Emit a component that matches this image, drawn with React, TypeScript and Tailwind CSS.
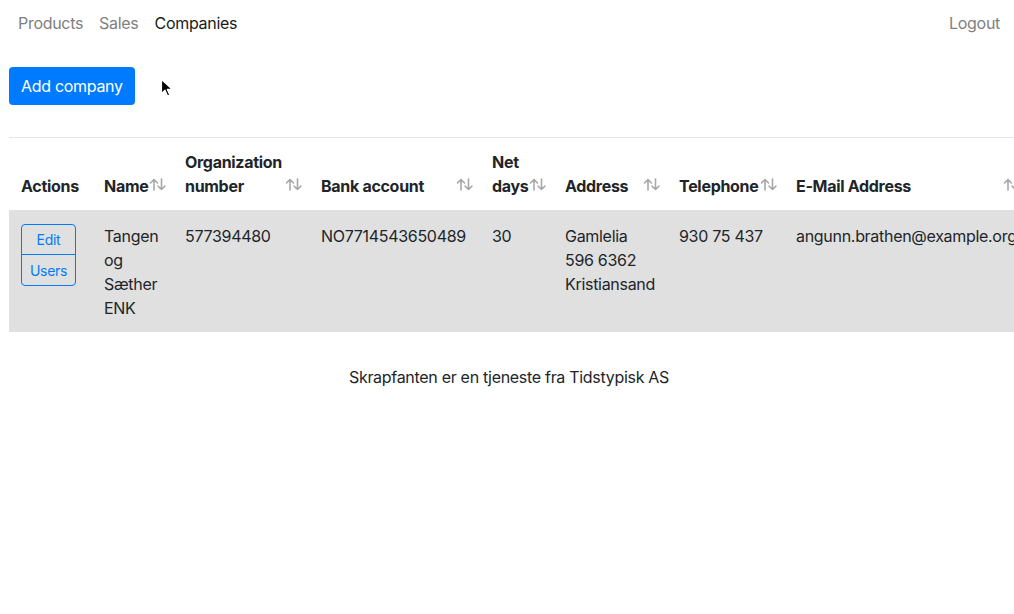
import React from 'react';

type Company = {
  name: string;
  orgNumber: string;
  bankAccount: string;
  netDays: number;
  address: string;
  telephone: string;
  email: string;
};

const companies: Company[] = [
  {
    name: 'Tangen og Sæther ENK',
    orgNumber: '577394480',
    bankAccount: 'NO7714543650489',
    netDays: 30,
    address: 'Gamlelia\n596 6362\nKristiansand',
    telephone: '930 75 437',
    email: 'angunn.brathen@example.org',
  },
];

const columns = [
  { label: 'Name', width: 'w-[81px]' },
  { label: 'Organization number', width: 'w-[136px]' },
  { label: 'Bank account', width: 'w-[171px]' },
  { label: 'Net days', width: 'w-[73px]' },
  { label: 'Address', width: 'w-[114px]' },
  { label: 'Telephone', width: 'w-[117px]' },
  { label: 'E-Mail Address', width: 'w-[243px]' },
];

function SortIcon() {
  return (
    <svg className="absolute right-[6px] bottom-[19px]" width="18" height="13" viewBox="0 0 18 13" fill="none" stroke="#a8a8a8" strokeWidth="1.6" strokeLinecap="round" strokeLinejoin="round">
      <path d="M5 12V1.5M1.5 5L5 1.5L8.5 5" />
      <path d="M12.5 1V11.5M9 8L12.5 11.5L16 8" />
    </svg>
  );
}

function Cursor() {
  return (
    <svg className="absolute left-[160px] top-[78px]" width="14" height="20" viewBox="0 0 14 20">
      <path d="M1.5 1.5V15.5L5 12.2L7.6 18L9.8 17L7.3 11.4H12.2Z" fill="#000" stroke="#fff" strokeWidth="1.2" strokeLinejoin="round" />
    </svg>
  );
}

export default function App() {
  return (
    <div className="relative min-h-screen w-full overflow-hidden bg-white text-[16px] leading-6 tracking-[-0.3px] text-[#212529] font-['Inter','Liberation_Sans',sans-serif]">
      <nav className="flex h-[46px] items-center justify-between pl-[10px] pr-[6px]">
        <div className="flex">
          <a className="px-2 text-[#808080]">Products</a>
          <a className="px-2 text-[#808080]">Sales</a>
          <a className="px-2 text-[#1a1a1a]">Companies</a>
        </div>
        <a className="px-2 text-[#808080]">Logout</a>
      </nav>

      <div className="pl-[9px]">
        <button className="mt-[21px] h-[38px] rounded-[4px] bg-[#007bff] px-3 text-white">Add company</button>
        <div className="mt-[32px] h-px w-[1005px] bg-[#e5e5e5]" />

        <table className="w-[1018px] table-fixed border-collapse text-left">
          <thead>
            <tr>
              <th className="w-[83px] px-3 py-3 align-bottom font-bold">Actions</th>
              {columns.map((col) => (
                <th key={col.label} className={`${col.width} relative py-3 pl-3 pr-[30px] align-bottom font-bold`}>
                  {col.label}
                  <SortIcon />
                </th>
              ))}
            </tr>
          </thead>
          <tbody>
            {companies.map((company) => (
              <tr key={company.orgNumber} className="bg-[#e0e0e0]">
                <td className="px-3 pt-[14px] pb-3 align-top">
                  <div className="flex w-[55px] flex-col text-[14px] leading-[21px] text-[#007bff]">
                    <button className="h-[31px] rounded-t-[4px] border border-[#007bff]">Edit</button>
                    <button className="-mt-px h-[32px] rounded-b-[4px] border border-[#007bff]">Users</button>
                  </div>
                </td>
                <td className="px-3 pt-[14px] pb-3 align-top">{company.name}</td>
                <td className="px-3 pt-[14px] pb-3 align-top">{company.orgNumber}</td>
                <td className="px-3 pt-[14px] pb-3 align-top">{company.bankAccount}</td>
                <td className="px-3 pt-[14px] pb-3 align-top">{company.netDays}</td>
                <td className="whitespace-pre-line px-3 pt-[14px] pb-3 align-top">{company.address}</td>
                <td className="px-3 pt-[14px] pb-3 align-top">{company.telephone}</td>
                <td className="whitespace-nowrap px-3 pt-[14px] pb-3 align-top">{company.email}</td>
              </tr>
            ))}
          </tbody>
        </table>

        <footer className="mt-[33px] w-[1000px] text-center">Skrapfanten er en tjeneste fra Tidstypisk AS</footer>
      </div>

      <Cursor />
    </div>
  );
}
